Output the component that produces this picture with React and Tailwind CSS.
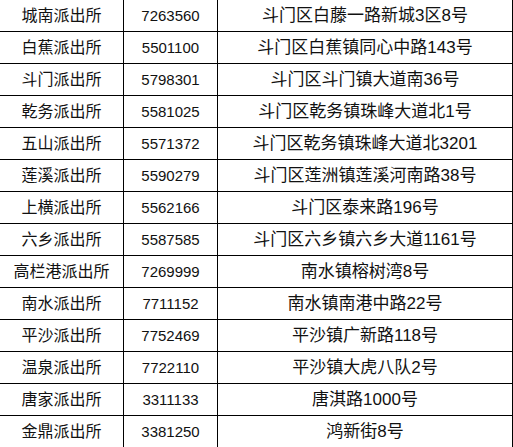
import React from 'react';

const rows = [
  ['城南派出所', '7263560', '斗门区白藤一路新城3区8号'],
  ['白蕉派出所', '5501100', '斗门区白蕉镇同心中路143号'],
  ['斗门派出所', '5798301', '斗门区斗门镇大道南36号'],
  ['乾务派出所', '5581025', '斗门区乾务镇珠峰大道北1号'],
  ['五山派出所', '5571372', '斗门区乾务镇珠峰大道北3201'],
  ['莲溪派出所', '5590279', '斗门区莲洲镇莲溪河南路38号'],
  ['上横派出所', '5562166', '斗门区泰来路196号'],
  ['六乡派出所', '5587585', '斗门区六乡镇六乡大道1161号'],
  ['高栏港派出所', '7269999', '南水镇榕树湾8号'],
  ['南水派出所', '7711152', '南水镇南港中路22号'],
  ['平沙派出所', '7752469', '平沙镇广新路118号'],
  ['温泉派出所', '7722110', '平沙镇大虎八队2号'],
  ['唐家派出所', '3311133', '唐淇路1000号'],
  ['金鼎派出所', '3381250', '鸿新街8号'],
];

export default function App() {
  return (
    <div
      className="w-[513px] h-[447px] overflow-hidden bg-white text-[#111]"
      style={{ fontFamily: '"Liberation Sans", "Noto Sans CJK SC", sans-serif' }}
    >
      {rows.map(([name, phone, addr]) => (
        <div key={name} className="grid grid-cols-[124px_94px_295px] h-[32px] border-b border-black">
          <div className="flex items-center justify-center border-r border-black text-[16px] leading-none">
            {name}
          </div>
          <div className="flex items-center justify-center border-r border-black text-[15px] leading-none">
            {phone}
          </div>
          <div className="flex items-center justify-center border-r border-black text-[17px] leading-none whitespace-nowrap">
            {addr}
          </div>
        </div>
      ))}
    </div>
  );
}
